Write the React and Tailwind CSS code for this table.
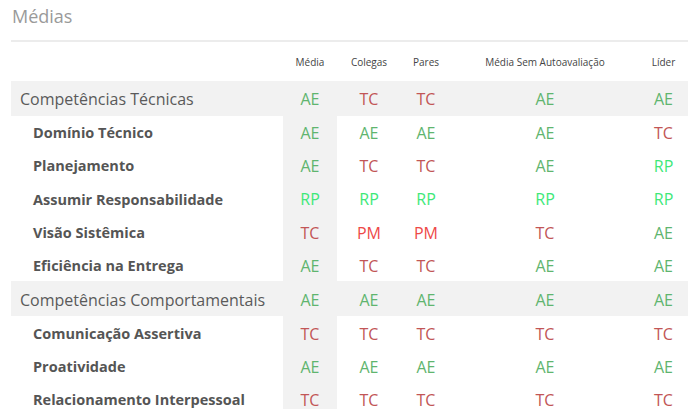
import React from "react";

const COLORS = {
  AE: "text-[#5fb56f]",
  TC: "text-[#c25656]",
  RP: "text-[#3ee878]",
  PM: "text-[#ee4848]",
};

const rows = [
  { cat: true, label: "Competências Técnicas", v: ["AE", "TC", "TC", "AE", "AE"] },
  { label: "Domínio Técnico", v: ["AE", "AE", "AE", "AE", "TC"] },
  { label: "Planejamento", v: ["AE", "TC", "TC", "AE", "RP"] },
  { label: "Assumir Responsabilidade", v: ["RP", "RP", "RP", "RP", "RP"] },
  { label: "Visão Sistêmica", v: ["TC", "PM", "PM", "TC", "AE"] },
  { label: "Eficiência na Entrega", v: ["AE", "TC", "TC", "AE", "AE"] },
  { cat: true, label: "Competências Comportamentais", v: ["AE", "AE", "AE", "AE", "AE"] },
  { label: "Comunicação Assertiva", v: ["TC", "TC", "TC", "TC", "TC"] },
  { label: "Proatividade", v: ["AE", "AE", "AE", "AE", "AE"] },
  { label: "Relacionamento Interpessoal", v: ["TC", "TC", "TC", "TC", "TC"] },
];

const headers = ["Média", "Colegas", "Pares", "Média Sem Autoavaliação", "Líder"];

export default function App() {
  return (
    <div className="w-[688px] h-[409px] overflow-hidden bg-white font-['Open_Sans',sans-serif]">
      <div className="ml-[11px] h-[42px] border-b-2 border-[#ececec]">
        <div className="pl-[1px] pt-[3px] text-[18px] leading-[26px] text-[#9a9a9a]">Médias</div>
      </div>
      <div className="ml-[11px] grid grid-cols-[272px_54px_64px_50px_188px_49px]">
        <div className="h-[39px]" />
        {headers.map((h) => (
          <div key={h} className="h-[39px] pt-[2px] flex items-center justify-center text-[10px] text-[#444] whitespace-nowrap">
            {h}
          </div>
        ))}
        {rows.map((r, i) => (
          <React.Fragment key={i}>
            <div
              className={
                r.cat
                  ? "h-[34.5px] pt-[2px] flex items-center pl-[9px] bg-[#f2f2f2] text-[16px] text-[#5a5a5a] whitespace-nowrap"
                  : "h-[33.2px] pt-[2px] flex items-center pl-[22px] text-[14.5px] font-bold text-[#555] whitespace-nowrap"
              }
            >
              {r.label}
            </div>
            {r.v.map((val, j) => (
              <div
                key={j}
                className={
                  (r.cat ? "h-[34.5px] " : "h-[33.2px] ") +
                  "pt-[2px] flex items-center justify-center text-[16px] " +
                  (r.cat || j === 0 ? "bg-[#f2f2f2] " : "") +
                  COLORS[val]
                }
              >
                {val}
              </div>
            ))}
          </React.Fragment>
        ))}
      </div>
    </div>
  );
}
